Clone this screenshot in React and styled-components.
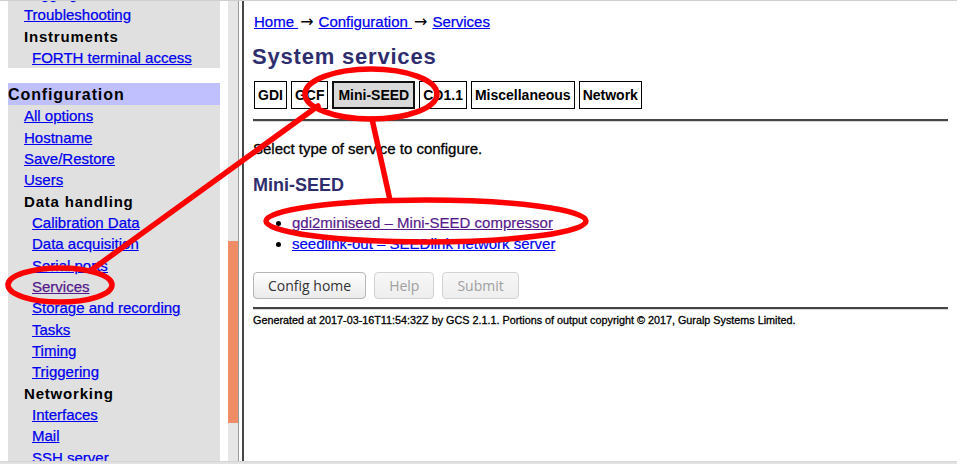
import styled, { createGlobalStyle } from "styled-components";

const GlobalStyle = createGlobalStyle`
  html, body {
    margin: 0;
    padding: 0;
    background: #fff;
    overflow: hidden;
  }
  body {
    font-family: "Liberation Sans", Arial, sans-serif;
    color: #000;
  }
`;

const sidebar = [
  { type: "panel", items: [
    { label: "Logging", level: 1, link: true },
    { label: "Troubleshooting", level: 1, link: true },
    { label: "Instruments", level: 1 },
    { label: "FORTH terminal access", level: 2, link: true },
  ] },
  { type: "header", label: "Configuration" },
  { type: "panel", items: [
    { label: "All options", level: 1, link: true },
    { label: "Hostname", level: 1, link: true },
    { label: "Save/Restore", level: 1, link: true },
    { label: "Users", level: 1, link: true },
    { label: "Data handling", level: 1 },
    { label: "Calibration Data", level: 2, link: true },
    { label: "Data acquisition", level: 2, link: true },
    { label: "Serial ports", level: 2, link: true },
    { label: "Services", level: 2, link: true, visited: true },
    { label: "Storage and recording", level: 2, link: true },
    { label: "Tasks", level: 2, link: true },
    { label: "Timing", level: 2, link: true },
    { label: "Triggering", level: 2, link: true },
    { label: "Networking", level: 1 },
    { label: "Interfaces", level: 2, link: true },
    { label: "Mail", level: 2, link: true },
    { label: "SSH server", level: 2, link: true },
    { label: "Time", level: 2, link: true },
  ] },
];

const tabs = ["GDI", "GCF", "Mini-SEED", "CD1.1", "Miscellaneous", "Network"];

function App() {
  return (
    <Page>
      <GlobalStyle />
      <TopRule />
      <Frames>
        <SideFrame>
          <SideContent>
            {sidebar.map((block, i) =>
              block.type === "header" ? (
                <SectionHeader key={i}>{block.label}</SectionHeader>
              ) : (
                <Panel key={i} $first={i === 0}>
                  {block.items.map((item) =>
                    item.link ? (
                      <NavRow key={item.label} $level={item.level}>
                        <NavLink href="#" $visited={item.visited}>{item.label}</NavLink>
                      </NavRow>
                    ) : (
                      <NavHeading key={item.label} $level={item.level}>{item.label}</NavHeading>
                    )
                  )}
                </Panel>
              )
            )}
          </SideContent>
          <Track>
            <Thumb />
          </Track>
        </SideFrame>
        <FrameDivider />
        <Main>
          <Breadcrumb>
            <TextLink href="#">Home </TextLink>
            <Arrow>→</Arrow>
            <TextLink href="#">Configuration </TextLink>
            <Arrow>→</Arrow>
            <TextLink href="#">Services</TextLink>
          </Breadcrumb>
          <Title>System services</Title>
          <Tabs>
            {tabs.map((t) => (
              <Tab key={t} $active={t === "Mini-SEED"}>{t}</Tab>
            ))}
          </Tabs>
          <Rule />
          <Intro>Select type of service to configure.</Intro>
          <SubTitle>Mini-SEED</SubTitle>
          <ServiceList>
            <li><TextLink href="#" $visited>gdi2miniseed – Mini-SEED compressor</TextLink></li>
            <li><TextLink href="#">seedlink-out – SEEDlink network server</TextLink></li>
          </ServiceList>
          <Buttons>
            <Button>Config home</Button>
            <Button disabled>Help</Button>
            <Button disabled>Submit</Button>
          </Buttons>
          <Rule $tight />
          <Footer>
            Generated at 2017-03-16T11:54:32Z by GCS 2.1.1. Portions of output copyright © 2017, Guralp Systems Limited.
          </Footer>
        </Main>
      </Frames>
      <BottomBar />
      <Annotations width="957" height="464" viewBox="0 0 957 464">
        <defs>
          <filter id="soft" x="-5%" y="-5%" width="110%" height="110%">
            <feGaussianBlur stdDeviation="0.5" />
          </filter>
        </defs>
        <g fill="none" stroke="#ff0000" strokeWidth="5.5" strokeLinecap="round" filter="url(#soft)">
          <ellipse cx="371" cy="94" rx="66" ry="25" />
          <ellipse cx="426" cy="221" rx="160" ry="21" />
          <ellipse cx="60" cy="285" rx="52" ry="17" />
          <path d="M318 106 L90 271" />
          <path d="M372 119 L390 200" />
        </g>
      </Annotations>
    </Page>
  );
}

const Page = styled.div`
  position: relative;
  width: 957px;
  height: 464px;
  display: flex;
  flex-direction: column;
  overflow: hidden;
`;

const TopRule = styled.div`
  height: 1px;
  background: #cfcfcf;
  flex: none;
`;

const BottomBar = styled.div`
  height: 2px;
  background: #e2e2e2;
  border-top: 1px solid #d4d4d4;
  flex: none;
`;

const Frames = styled.div`
  flex: 1;
  display: flex;
  min-height: 0;
`;

const SideFrame = styled.div`
  width: 240px;
  flex: none;
  display: flex;
  overflow: hidden;
`;

const SideContent = styled.div`
  width: 212px;
  margin-left: 8px;
  margin-right: 8px;
  flex: none;
`;

const Panel = styled.div`
  background: #e0e0e0;
  margin-top: ${(p) => (p.$first ? "-18px" : "0")};
  margin-bottom: ${(p) => (p.$first ? "15px" : "0")};
`;

const SectionHeader = styled.div`
  background: #c0c0ff;
  height: 22px;
  line-height: 23px;
  font-weight: bold;
  font-size: 16px;
  letter-spacing: 0.9px;
  color: #000;
`;

const NavRow = styled.div`
  height: 21.33px;
  line-height: 21.33px;
  padding-left: ${(p) => (p.$level === 2 ? 24 : 16)}px;
  font-size: 15px;
  white-space: nowrap;
  -webkit-text-stroke: 0.25px currentColor;
`;

const NavHeading = styled.div`
  height: 21.33px;
  line-height: 21.33px;
  padding-left: ${(p) => (p.$level === 2 ? 24 : 16)}px;
  font-size: 15px;
  font-weight: bold;
  letter-spacing: 0.8px;
  white-space: nowrap;
`;

const NavLink = styled.a`
  color: ${(p) => (p.$visited ? "#551a8b" : "#0000ee")};
  text-decoration: underline;
`;

const Track = styled.div`
  width: 10px;
  flex: none;
  background: #e6e6e6;
  border-right: 1px solid #9a9a9a;
`;

const Thumb = styled.div`
  margin-top: 240px;
  height: 182px;
  background: #ef8e66;
`;

const FrameDivider = styled.div`
  width: 2px;
  margin-left: 2px;
  flex: none;
  background: #474747;
`;

const Main = styled.div`
  flex: 1;
  padding: 0 9px 0 9px;
  min-width: 0;
`;

const Breadcrumb = styled.div`
  margin-top: 11px;
  margin-left: 1px;
  line-height: 20px;
  font-size: 15px;
  white-space: nowrap;
  -webkit-text-stroke: 0.25px currentColor;
`;

const Arrow = styled.span`
  font-family: "DejaVu Sans", sans-serif;
  font-size: 16px;
  line-height: 14px;
  -webkit-text-stroke: 0;
  margin: 0 5px 0 2px;
`;

const TextLink = styled.a`
  color: ${(p) => (p.$visited ? "#551a8b" : "#0000ee")};
  text-decoration: underline;
`;

const Title = styled.h1`
  margin: 11px 0 0 -1px;
  line-height: 28px;
  font-size: 22px;
  letter-spacing: 0.8px;
  font-weight: bold;
  color: #2e2d6e;
`;

const Tabs = styled.div`
  margin-top: 10px;
  margin-left: 1px;
  display: flex;
  gap: 4px;
`;

const Tab = styled.div`
  box-sizing: border-box;
  height: 28px;
  line-height: ${(p) => (p.$active ? 24 : 26)}px;
  padding: 0 ${(p) => (p.$active ? 4 : 3)}px;
  border: ${(p) => (p.$active ? "2px solid #111" : "1px solid #000")};
  background: ${(p) => (p.$active ? "#d9d9d9" : "#fff")};
  font-size: 14px;
  font-weight: bold;
`;

const Rule = styled.div`
  margin-top: ${(p) => (p.$tight ? 8 : 10)}px;
  height: 2px;
  background: #454545;
  box-shadow: 0 1px 0 #d8d8d8;
`;

const Intro = styled.p`
  margin: 18px 0 0;
  line-height: 20px;
  font-size: 15px;
  -webkit-text-stroke: 0.3px currentColor;
`;

const SubTitle = styled.h3`
  margin: 14px 0 0;
  line-height: 24px;
  font-size: 18px;
  font-weight: bold;
  color: #2e2d6e;
`;

const ServiceList = styled.ul`
  margin: 15px 0 0;
  padding-left: 39px;
  font-size: 15px;
  line-height: 21px;
  -webkit-text-stroke: 0.2px currentColor;
`;

const Buttons = styled.div`
  margin-top: 18px;
  display: flex;
  gap: 8px;
`;

const Button = styled.button`
  box-sizing: border-box;
  height: 27px;
  padding: 0 14px;
  border-radius: 4px;
  font-family: "Open Sans", "Liberation Sans", sans-serif;
  font-size: 14px;
  color: #333;
  border: 1px solid #b5b5b5;
  background: linear-gradient(#fefefe, #ebebeb);
  &:disabled {
    color: #a0a0a0;
    border-color: #d2d2d2;
    background: linear-gradient(#f7f7f7, #eeeeee);
  }
`;

const Footer = styled.div`
  margin-top: 4px;
  line-height: 14px;
  font-size: 10.8px;
  -webkit-text-stroke: 0.3px currentColor;
  white-space: nowrap;
`;

const Annotations = styled.svg`
  position: absolute;
  top: 0;
  left: 0;
  pointer-events: none;
`;

export default App;
